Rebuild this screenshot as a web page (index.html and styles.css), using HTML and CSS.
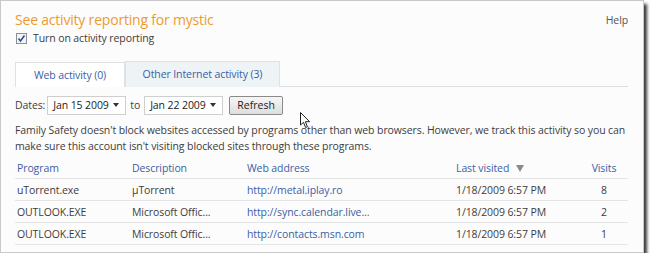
FILE: index.html
```
<!DOCTYPE html>
<html>
<head>
    <title>Activity reporting</title>
    <meta charset="utf-8">
    <link rel="stylesheet" href="styles.css">
</head>
<body>
    <div class="frame">
        <div class="head">
            <h1>See activity reporting for mystic</h1>
            <a class="help">Help</a>
        </div>
        <div class="check">
            <svg class="box" width="11" height="11" viewBox="0 0 11 11">
                <rect x="0.5" y="0.5" width="10" height="10" fill="#f4f4f4" stroke="#8e8f8f"/>
                <path d="M2.5 5.5 L4.5 8 L8.5 2.5" fill="none" stroke="#2a4f9a" stroke-width="1.6"/>
            </svg>
            <span>Turn on activity reporting</span>
        </div>

        <div class="tabs">
            <div class="tab">Web activity (0)</div>
            <div class="tab active">Other Internet activity (3)</div>
            <div class="tab-rest"></div>
        </div>

        <div class="dates">
            <span>Dates:</span>
            <div class="picker"><span>Jan 15 2009</span><span class="arrow"></span></div>
            <span>to</span>
            <div class="picker"><span>Jan 22 2009</span><span class="arrow"></span></div>
            <button class="refresh">Refresh</button>
        </div>

        <p class="note">Family Safety doesn't block websites accessed by programs other than web browsers. However, we track this activity so you can make sure this account isn't visiting blocked sites through these programs.</p>

        <table class="report">
            <tr>
                <th class="c-prog">Program</th>
                <th class="c-desc">Description</th>
                <th class="c-web">Web address</th>
                <th class="c-last">Last visited <span class="sort"></span></th>
                <th class="c-visits">Visits</th>
            </tr>
            <tr>
                <td>uTorrent.exe</td>
                <td>µTorrent</td>
                <td><a>http://metal.iplay.ro</a></td>
                <td>1/18/2009 6:57 PM</td>
                <td class="c-visits">8</td>
            </tr>
            <tr>
                <td>OUTLOOK.EXE</td>
                <td>Microsoft Offic...</td>
                <td><a>http://sync.calendar.live...</a></td>
                <td>1/18/2009 6:57 PM</td>
                <td class="c-visits">2</td>
            </tr>
            <tr>
                <td>OUTLOOK.EXE</td>
                <td>Microsoft Offic...</td>
                <td><a>http://contacts.msn.com</a></td>
                <td>1/18/2009 6:57 PM</td>
                <td class="c-visits">1</td>
            </tr>
        </table>

        <svg class="cursor" width="12" height="17" viewBox="0 0 12 17">
            <path d="M0.5 0.5 L0.5 13 L3.5 10.3 L5.6 15.5 L7.4 14.7 L5.4 9.7 L9.6 9.7 Z" fill="#fff" stroke="#222" stroke-width="1"/>
        </svg>
    </div>
</body>
</html>
```

FILE: styles.css
```
body {
    margin: 0;
    background: #ffffff;
    font-family: "Open Sans", "Liberation Sans", sans-serif;
    font-size: 10.5px;
    letter-spacing: -0.1px;
    color: #3c3c3c;
}
.frame {
    position: relative;
    width: 628px;
    height: 251px;
    padding: 0 0 0 14px;
    background: #fcfcfc;
    border: 1px solid #c9c9c9;
    box-shadow: 3px 4px 3px #3a3a3a;
}
.head {
    display: flex;
    justify-content: space-between;
    align-items: flex-start;
    padding-right: 15px;
}
h1 {
    margin: 9px 0 0 0;
    line-height: 20px;
    font-size: 14px;
    font-weight: normal;
    color: #ec9b2f;
    letter-spacing: -0.2px;
}
.help {
    margin-top: 12px;
    color: #555;
}
.check {
    display: flex;
    align-items: center;
    gap: 6px;
    height: 14px;
    margin-top: 1px;
    margin-left: 1px;
}
.tabs {
    display: flex;
    margin-top: 16px;
    height: 26px;
}
.tab {
    box-sizing: border-box;
    line-height: 25px;
    white-space: nowrap;
    text-align: center;
    color: #3b5ea6;
    border: 1px solid #dde2e5;
    border-bottom: none;
    background: #ffffff;
}
.tab:first-child {
    width: 110px;
    margin-top: 1px;
}
.tab.active {
    width: 155px;
    background: #eef3f5;
}
.tab-rest {
    flex: 1;
    margin-right: 15px;
    border-bottom: 1px solid #dadfe2;
}
.dates {
    display: flex;
    align-items: center;
    gap: 4px;
    height: 20px;
    margin-top: 8px;
}
.dates > span:first-child {
    margin-right: -2px;
}
.picker {
    box-sizing: border-box;
    display: flex;
    align-items: center;
    justify-content: space-between;
    width: 79px;
    height: 19px;
    padding: 0 6px 0 5px;
    border: 1px solid #cfcfcf;
    background: #fff;
    color: #222;
}
.arrow {
    width: 0;
    height: 0;
    border-left: 3px solid transparent;
    border-right: 3px solid transparent;
    border-top: 4px solid #333;
}
.refresh {
    box-sizing: border-box;
    margin-left: 2px;
    width: 54px;
    height: 19px;
    padding: 0;
    font-family: inherit;
    font-size: 10.5px;
    color: #222;
    border: 1px solid #8a8a8a;
    border-radius: 2px;
    background: linear-gradient(#f6f6f6, #dedede);
}
.note {
    margin: 7px 15px 0 0;
    line-height: 16px;
}
.report {
    width: 613px;
    margin-top: 3px;
    border-collapse: collapse;
}
.report th {
    font-weight: normal;
    color: #3b5ea6;
    text-align: left;
}
.report th, .report td {
    height: 21px;
    padding: 0 2px;
    border-bottom: 1px solid #e4e4e4;
}
.report a {
    color: #3b5ea6;
}
.c-prog { width: 111px; }
.c-desc { width: 111px; }
.c-web { width: 205px; }
.c-last { width: 110px; }
.report .c-visits {
    padding-left: 14px;
    text-align: center;
}
.sort {
    display: inline-block;
    margin-left: 4px;
    border-left: 4px solid transparent;
    border-right: 4px solid transparent;
    border-top: 7px solid #8a8a8a;
}
.cursor {
    position: absolute;
    left: 299px;
    top: 111px;
}
```
